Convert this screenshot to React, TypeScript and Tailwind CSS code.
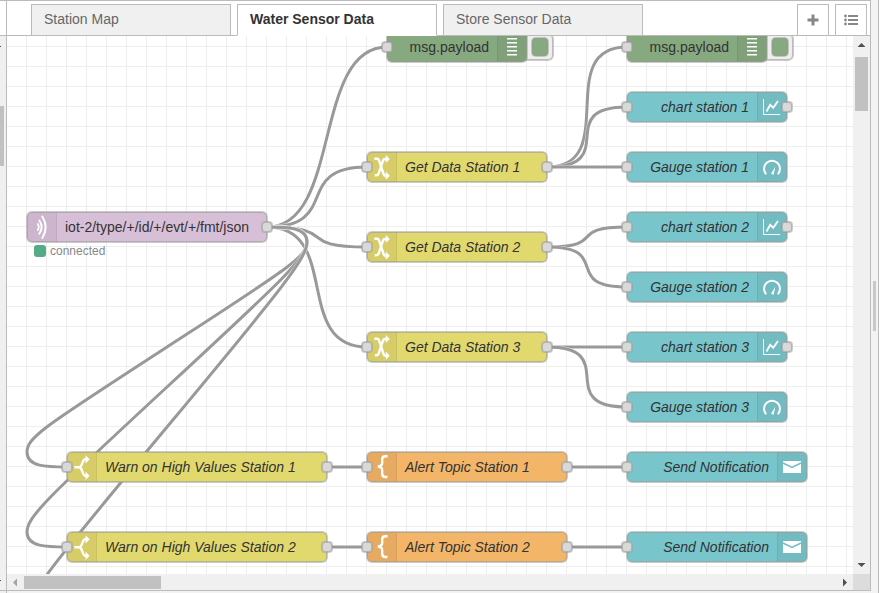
import React from "react";

type Kind = "mqtt" | "change" | "switch" | "template" | "chart" | "gauge" | "mail" | "debug";

interface FlowNode {
  x: number;
  y: number;
  w: number;
  kind: Kind;
  label: string;
  italic?: boolean;
  input?: boolean;
  output?: boolean;
}

const COLORS: Record<Kind, string> = {
  mqtt: "bg-[#d8bfd8]",
  change: "bg-[#e2d96e]",
  switch: "bg-[#e2d96e]",
  template: "bg-[#f3b567]",
  chart: "bg-[#78c6cc]",
  gauge: "bg-[#78c6cc]",
  mail: "bg-[#78c6cc]",
  debug: "bg-[#87a980]",
};

// Canvas coordinates: x is the left edge, y is the vertical centre of a node.
const NODES: FlowNode[] = [
  { x: 380, y: 11, w: 140, kind: "debug", label: "msg.payload", input: true },
  { x: 620, y: 11, w: 140, kind: "debug", label: "msg.payload", input: true },
  { x: 620, y: 71, w: 160, kind: "chart", label: "chart station 1", italic: true, input: true, output: true },
  { x: 620, y: 131, w: 160, kind: "gauge", label: "Gauge station 1", italic: true, input: true },
  { x: 360, y: 131, w: 180, kind: "change", label: "Get Data Station 1", italic: true, input: true, output: true },
  { x: 20, y: 191, w: 240, kind: "mqtt", label: "iot-2/type/+/id/+/evt/+/fmt/json", output: true },
  { x: 360, y: 211, w: 180, kind: "change", label: "Get Data Station 2", italic: true, input: true, output: true },
  { x: 620, y: 191, w: 160, kind: "chart", label: "chart station 2", italic: true, input: true, output: true },
  { x: 620, y: 251, w: 160, kind: "gauge", label: "Gauge station 2", italic: true, input: true },
  { x: 360, y: 311, w: 180, kind: "change", label: "Get Data Station 3", italic: true, input: true, output: true },
  { x: 620, y: 311, w: 160, kind: "chart", label: "chart station 3", italic: true, input: true, output: true },
  { x: 620, y: 371, w: 160, kind: "gauge", label: "Gauge station 3", italic: true, input: true },
  { x: 60, y: 431, w: 260, kind: "switch", label: "Warn on High Values Station 1", italic: true, input: true, output: true },
  { x: 360, y: 431, w: 200, kind: "template", label: "Alert Topic Station 1", italic: true, input: true, output: true },
  { x: 620, y: 431, w: 180, kind: "mail", label: "Send Notification", italic: true, input: true },
  { x: 60, y: 511, w: 260, kind: "switch", label: "Warn on High Values Station 2", italic: true, input: true, output: true },
  { x: 360, y: 511, w: 200, kind: "template", label: "Alert Topic Station 2", italic: true, input: true, output: true },
  { x: 620, y: 511, w: 180, kind: "mail", label: "Send Notification", italic: true, input: true },
];

const LINKS: [number, number, number, number][] = [
  [260, 191, 380, 11],
  [260, 191, 360, 131],
  [260, 191, 360, 211],
  [260, 191, 360, 311],
  [260, 191, 60, 431],
  [260, 191, 60, 511],
  [260, 191, 60, 591],
  [540, 131, 620, 11],
  [540, 131, 620, 71],
  [540, 131, 620, 131],
  [540, 211, 620, 191],
  [540, 211, 620, 251],
  [540, 311, 620, 311],
  [540, 311, 620, 371],
  [320, 431, 360, 431],
  [560, 431, 620, 431],
  [320, 511, 360, 511],
  [560, 511, 620, 511],
];

function linkPath([ox, oy, dx, dy]: [number, number, number, number]): string {
  const w = dx - ox;
  const h = dy - oy;
  if (w > 0) {
    const length = Math.hypot(w, h);
    const reach = length < 100 ? 0.75 * length : 75;
    return `M${ox} ${oy} C${ox + reach} ${oy} ${dx - reach} ${dy} ${dx} ${dy}`;
  }
  // Backward links leave to the right, cross diagonally and enter from the left.
  const topX = ox + 40;
  const topY = oy + 15;
  const botX = dx - 40;
  const botY = dy - 15;
  const midX = dx - w / 2;
  const midY = dy - h / 2;
  const bend = oy + 21 + h * 0.0875;
  return `M${ox} ${oy} C${ox + 20} ${oy} ${topX} ${oy} ${topX} ${topY} S${ox + 20} ${bend} ${midX} ${midY} S${botX} ${botY - 15} ${botX} ${botY} S${dx - 20} ${dy} ${dx} ${dy}`;
}

function NodeIcon({ kind }: { kind: Kind }) {
  const line = { fill: "none", stroke: "#fff" } as const;
  return (
    <svg width="30" height="30" viewBox="0 0 30 30" className="block">
      {kind === "mqtt" && (
        <g {...line} strokeWidth="2" strokeLinecap="round">
          <path d="M10.8 12Q12.8 15 10.8 18.2" strokeWidth="1.7" />
          <path d="M12.3 8.5Q17 15 12.3 21.8" />
          <path d="M15.3 4.6Q22 15.5 15.3 26" />
        </g>
      )}
      {kind === "change" && (
        <g {...line} strokeWidth="2.4">
          <path d="M7.3 6.8H10.3Q11.4 6.8 12 8.4L16.6 22Q17.2 23.8 18.6 23.8H20" />
          <path d="M7.8 23.2H9.4Q11 23.2 11.8 21.2L16 8.6Q16.6 7 18.2 7H20" />
          <path d="M18.8 3L22.8 7.1L18.8 11ZM18.8 19.6L22.8 23.8L18.8 27.8Z" fill="#fff" stroke="none" />
        </g>
      )}
      {kind === "switch" && (
        <g {...line} strokeWidth="2.4">
          <path d="M7.5 15.2H13M19.5 7.3H18.4C15.2 7.3 16 12.8 13 15.2C16 17.5 15.2 23.8 18.4 23.8H19.5" />
          <path d="M18.6 3.2L22.6 7.3L18.6 11.4ZM18.6 19.7L22.6 23.8L18.6 28Z" fill="#fff" stroke="none" />
        </g>
      )}
      {kind === "template" && (
        <path d="M20.5 4.2H18.5Q15.2 4.2 15.2 7.2V11Q15.2 14.2 10.8 14.5Q15.2 14.8 15.2 18.2V22Q15.2 25 18.5 25H20.5" {...line} strokeWidth="2.4" />
      )}
      {kind === "chart" && (
        <g {...line}>
          <path d="M6.5 7V22.5H23" strokeWidth="1" />
          <path d="M9.5 19.5L13.2 12.8L16.2 15.8L21 9" strokeWidth="1.8" />
        </g>
      )}
      {kind === "gauge" && (
        <g {...line}>
          <path d="M9.2 22.2A8 8 0 1 1 20.8 22.2" strokeWidth="2" />
          <path d="M18.4 14.5L16.6 22.8L14 21.8Z" fill="#fff" stroke="none" />
        </g>
      )}
      {kind === "mail" && (
        <g>
          <path d="M6 9H24V21H6Z" fill="#fff" />
          <path d="M6 11L15 15.4L24 11" fill="none" stroke="#72bcc2" strokeWidth="1.4" />
        </g>
      )}
      {kind === "debug" && <path d="M10 6.8H20M10 10.8H20M10 14.8H20M10 18.8H20M10 22.8H20" {...line} strokeWidth="1.5" />}
    </svg>
  );
}

const EDGE = "shadow-[0_0_0_1px_rgba(153,153,153,0.5),inset_0_0_0_1px_rgba(153,153,153,0.6)]";

function Port({ side }: { side: "left" | "right" }) {
  return (
    <div className={`absolute top-[10px] h-[10px] w-[10px] rounded-[3px] bg-[#d9d9d9] ${EDGE} ${side === "left" ? "-left-[5px]" : "-right-[5px]"}`} />
  );
}

function CanvasNode({ node }: { node: FlowNode }) {
  const iconRight = ["debug", "chart", "gauge", "mail"].includes(node.kind);
  return (
    <div className="absolute h-[30px]" style={{ left: node.x, top: node.y - 15, width: node.w }}>
      {node.kind === "debug" && (
        <div className={`absolute top-[2px] -right-[26px] h-[26px] w-[32px] rounded-[5px] bg-[#eee] ${EDGE}`}>
          <div className={`absolute top-[4px] right-[5px] h-[18px] w-[16px] rounded-[4px] ${COLORS.debug} ${EDGE}`} />
        </div>
      )}
      <div className={`relative flex h-full w-full items-center overflow-hidden rounded-[5px] ${COLORS[node.kind]} ${iconRight ? "flex-row-reverse" : ""}`}>
        <div
          className={`h-full w-[30px] shrink-0 bg-black/5 ${
            iconRight ? "shadow-[inset_1px_0_0_rgba(0,0,0,0.06)]" : "shadow-[inset_-1px_0_0_rgba(0,0,0,0.06)]"
          }`}
        >
          <NodeIcon kind={node.kind} />
        </div>
        <span className={`whitespace-nowrap px-2 text-[14px] leading-[30px] text-[#333] ${node.italic ? "italic" : ""}`}>{node.label}</span>
      </div>
      <div className={`absolute inset-0 rounded-[5px] ${EDGE}`} />
      {node.input && <Port side="left" />}
      {node.output && <Port side="right" />}
    </div>
  );
}

function Tab({ label, active }: { label: string; active?: boolean }) {
  return (
    <div
      className={`h-8 w-[200px] shrink-0 border border-[#bbb] pl-3 text-[14px] leading-[29px] ${
        active ? "border-b-white bg-white font-bold text-[#333]" : "bg-[#f0f0f0] text-[#666]"
      }`}
    >
      {label}
    </div>
  );
}

function Triangle({ points, color = "#505050" }: { points: string; color?: string }) {
  return (
    <svg width="17" height="17" viewBox="0 0 17 17" className="block shrink-0">
      <polygon points={points} fill={color} />
    </svg>
  );
}

function TabBar() {
  return (
    <div className="flex h-9 shrink-0 items-end border-t border-[#bbb] bg-[linear-gradient(#bbb,#bbb)] bg-[length:100%_1px] bg-bottom bg-no-repeat pl-6">
      <div className="flex gap-[6px]">
        <Tab label="Station Map" />
        <Tab label="Water Sensor Data" active />
        <Tab label="Store Sensor Data" />
      </div>
      <div className="mr-[3px] ml-auto flex gap-[6px]">
        <div className="flex h-8 w-8 items-center justify-center border border-[#bbb] bg-white">
          <svg width="12" height="12" viewBox="0 0 12 12">
            <path d="M4.5 0.5H7.5V4.5H11.5V7.5H7.5V11.5H4.5V7.5H0.5V4.5H4.5Z" fill="#888" />
          </svg>
        </div>
        <div className="flex h-8 w-8 items-center justify-center border border-[#bbb] bg-white">
          <svg width="14" height="12" viewBox="0 0 14 12" fill="#888">
            <path d="M4 1H14V3H4ZM4 5H14V7H4ZM4 9H14V11H4Z" />
            <circle cx="1.5" cy="2" r="1.4" />
            <circle cx="1.5" cy="6" r="1.4" />
            <circle cx="1.5" cy="10" r="1.4" />
          </svg>
        </div>
      </div>
    </div>
  );
}

function Canvas() {
  return (
    <div className="relative h-[538px] w-[846px] shrink-0 overflow-hidden bg-white">
      <svg width="846" height="538" className="absolute inset-0">
        <g fill="#eee">
          {Array.from({ length: 42 }, (_, i) => (
            <rect key={`v${i}`} x={19 + i * 20} y="0" width="1" height="538" />
          ))}
          {Array.from({ length: 27 }, (_, i) => (
            <rect key={`h${i}`} x="0" y={10 + i * 20} width="846" height="1" />
          ))}
        </g>
        {LINKS.map((link, i) => (
          <g key={i} fill="none">
            <path d={linkPath(link)} stroke="#fff" strokeWidth="4" strokeOpacity="0.6" />
            <path d={linkPath(link)} stroke="#999" strokeWidth="3" />
          </g>
        ))}
      </svg>
      {NODES.map((node, i) => (
        <CanvasNode key={i} node={node} />
      ))}
      <div className="absolute top-[208px] left-[27px] flex items-center gap-1">
        <div className="h-[12px] w-[12px] rounded-[3px] bg-[#5a8]" />
        <span className="text-[12px] leading-[14px] text-[#888]">connected</span>
      </div>
    </div>
  );
}

export default function App() {
  return (
    <div className="flex h-[593px] w-[879px] overflow-hidden bg-[#f3f3f3] font-['Liberation_Sans',Arial,sans-serif]">
      <div className="flex w-[7px] shrink-0 flex-col border-r border-[#bbb] bg-[#f0f0f0]">
        <div className="h-9 shrink-0 border-y border-[#bbb] bg-white" />
        <div className="mt-[10px] h-px w-px shrink-0 bg-[#505050]" />
        <div className="mt-[59px] h-[60px] w-[4px] shrink-0 bg-[#c1c1c1]" />
        <div className="mt-[414px] h-px w-px shrink-0 bg-[#505050]" />
        <div className="mt-[9px] h-px shrink-0 bg-[#bbb]" />
      </div>
      <div className="flex w-[864px] shrink-0 flex-col">
        <div className="flex h-[591px] flex-col border-r border-b border-[#bbb] bg-white">
          <TabBar />
          <div className="flex">
            <Canvas />
            <div className="flex w-[17px] flex-col items-center justify-between bg-[#f0f0f0]">
              <Triangle points="4.5,11 12.5,11 8.5,7" />
              <div className="mt-1 mb-auto h-[54px] w-[13px] bg-[#c1c1c1]" />
              <Triangle points="4.5,6 12.5,6 8.5,10" />
            </div>
          </div>
          <div className="flex h-4 items-center bg-[#f0f0f0]">
            <Triangle points="10,4.5 10,12.5 6,8.5" color="#a3a3a3" />
            <div className="h-[13px] w-[137px] bg-[#c1c1c1]" />
            <div className="ml-auto">
              <Triangle points="7,4.5 7,12.5 11,8.5" />
            </div>
            <div className="h-4 w-[17px] bg-[#dcdcdc]" />
          </div>
        </div>
      </div>
      <div className="flex w-[8px] items-start border-r border-[#bbb] bg-[#f3f3f3]">
        <div className="mt-[281px] ml-[2px] h-[50px] w-[3px] bg-[#c8c8c8]" />
      </div>
    </div>
  );
}
